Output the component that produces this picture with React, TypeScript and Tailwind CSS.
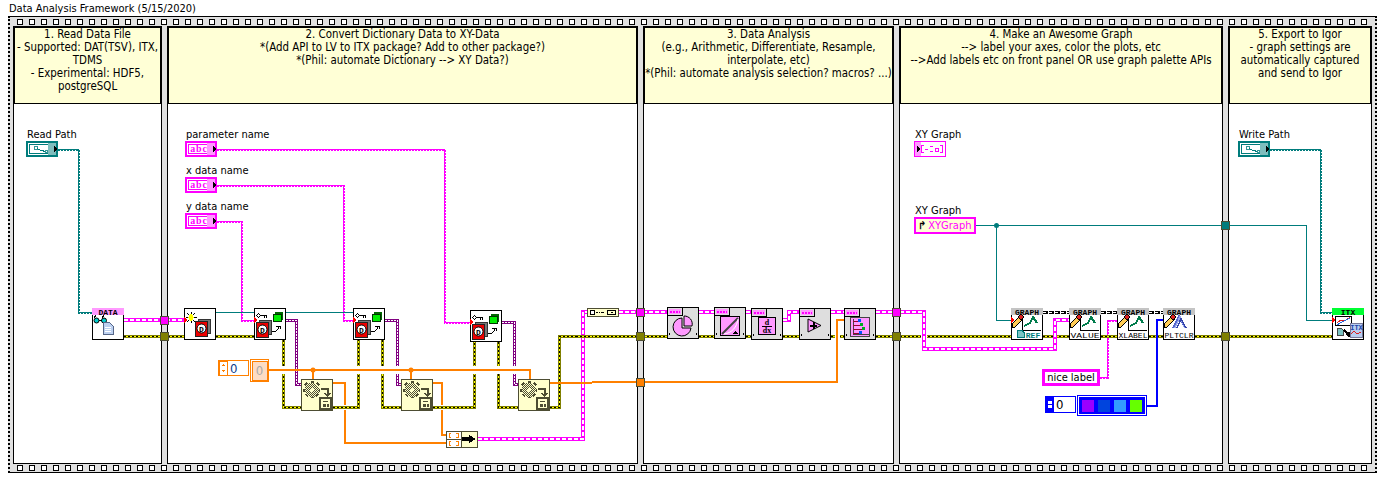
import React from 'react';

const holes = Array.from({ length: 113 }, (_, i) => i);

const panels = [
  {
    width: 'w-[149px]',
    note: ['1. Read Data File', '- Supported: DAT(TSV), ITX,', 'TDMS', '- Experimental: HDF5,', 'postgreSQL'],
  },
  {
    width: 'w-[471px]',
    note: [
      '2. Convert Dictionary Data to XY-Data',
      '*(Add API to LV to ITX package? Add to other package?)',
      '*(Phil: automate Dictionary --> XY Data?)',
    ],
  },
  {
    width: 'w-[251px]',
    note: [
      '3. Data Analysis',
      '(e.g., Arithmetic, Differentiate, Resample,',
      'interpolate, etc)',
      '*(Phil: automate analysis selection? macros? ...)',
    ],
  },
  {
    width: 'w-[324px]',
    note: [
      '4. Make an Awesome Graph',
      '-->  label your axes, color the plots, etc',
      '-->Add labels etc on front panel OR use graph palette APIs',
    ],
  },
  {
    width: 'w-[144px]',
    note: ['5. Export to Igor', '- graph settings are', 'automatically captured', 'and send to Igor'],
  },
];

const Strip = ({ top }: { top: boolean }) => (
  <div className={top ? 'flex h-[9px] gap-[6px] pl-[7px] pt-[2px]' : 'flex h-[8px] gap-[6px] pl-[7px] pt-[1px]'}>
    {holes.map((i) => (
      <div key={i} className="h-[6px] w-[6px] shrink-0 border border-black bg-white" />
    ))}
  </div>
);

// wire styles, one per LabVIEW data type
const Cluster = ({ d }: { d: string }) => (
  <g fill="none">
    <path d={d} stroke="#ff00ff" strokeWidth="4" />
    <path d={d} stroke="#ffffff" strokeWidth="2" strokeDasharray="4 2" />
  </g>
);

const ErrorWire = ({ d }: { d: string }) => (
  <g fill="none">
    <path d={d} stroke="#808000" strokeWidth="3" />
    <path d={d} stroke="#ffff00" strokeWidth="1" />
    <path d={d} stroke="#000000" strokeWidth="1" strokeDasharray="2 2" />
  </g>
);

const Purple = ({ d }: { d: string }) => (
  <g fill="none">
    <path d={d} stroke="#800080" strokeWidth="3" />
    <path d={d} stroke="#ffffff" strokeWidth="1" strokeDasharray="2 1" />
  </g>
);

const Dotted = ({ d, color }: { d: string; color: string }) => (
  <g fill="none">
    <path d={d} stroke={color} strokeWidth="1" />
    <path d={d} stroke={color} strokeWidth="2" strokeDasharray="2 1" />
  </g>
);

const Solid = ({ d, color, w = 1 }: { d: string; color: string; w?: number }) => (
  <path d={d} fill="none" stroke={color} strokeWidth={w} />
);

const Gap = ({ x, y, w, h }: { x: number; y: number; w: number; h: number }) => (
  <rect x={x} y={y} width={w} height={h} fill="#ffffff" />
);

const Tunnel = ({ x, y, color }: { x: number; y: number; color: string }) => (
  <rect x={x + 0.5} y={y + 0.5} width="8" height="8" fill={color} stroke="#4d4d33" />
);

const Book = ({ x, y }: { x: number; y: number }) => (
  <g transform={`translate(${x} ${y})`}>
    <rect x="3.5" y="0.5" width="12" height="14" fill="#777777" stroke="#333333" />
    <rect x="0.5" y="2.5" width="12" height="15" fill="#ee0000" stroke="#222222" />
    <circle cx="6.5" cy="9.5" r="4.5" fill="#ffffff" stroke="#000000" shapeRendering="auto" />
    <text x="6.5" y="12.5" textAnchor="middle" fontSize="8" fontWeight="700" fontFamily="Liberation Mono, monospace" fill="#000000">
      D
    </text>
  </g>
);

const RedPin = ({ x, y }: { x: number; y: number }) => <path d={`M${x} ${y - 3}l4 3l-4 3z`} fill="#ff0000" />;

const NewDict = ({ x, y }: { x: number; y: number }) => (
  <g transform={`translate(${x} ${y})`}>
    <rect x="0.5" y="0.5" width="31" height="31" fill="#ffffff" stroke="#000000" />
    <path d="M7 4v11M2 9.5h11M3 5l8 9M11 5l-8 9" stroke="#000000" strokeWidth="1" />
    <path d="M7 6v7M4 9.5h6M5 7l4 5M9 7l-4 5" stroke="#ffff00" strokeWidth="1.4" />
    <Book x={11} y={11} />
    <RedPin x={0} y={12} />
  </g>
);

const GetDict = ({ x, y }: { x: number; y: number }) => (
  <g transform={`translate(${x} ${y})`}>
    <rect x="0.5" y="0.5" width="31" height="31" fill="#ffffff" stroke="#000000" />
    <circle cx="4.5" cy="7.5" r="1.8" fill="#ffffff" stroke="#000000" />
    <path d="M6 7.500h7M10.500 7.500v2M12.500 7.500v2" stroke="#000000" />
    <rect x="21" y="4" width="8" height="8" fill="#006600" />
    <rect x="19.500" y="6.500" width="8" height="7" fill="#00ee00" stroke="#003300" />
    <path d="M18 24c4 0 5-1 7-5M22 18h4v3" fill="none" stroke="#000000" />
    <Book x={2} y={12} />
    <RedPin x={0} y={12} />
  </g>
);

const Config = ({ x, y }: { x: number; y: number }) => (
  <g transform={`translate(${x} ${y})`}>
    <rect x="0.500" y="0.500" width="31" height="31" fill="#ffffcc" stroke="#4d4d33" />
    <path d="M11 2v18M2 11h18M4.500 4.500l13 13M17.500 4.500l-13 13" stroke="#4d4d33" strokeWidth="3" strokeDasharray="2 1" />
    <circle cx="11" cy="11" r="7" fill="url(#checker)" />
    <circle cx="11" cy="11" r="2" fill="#ffffcc" />
    <path d="M20 9.500h6.500v6M23.500 14l3 3l3-3" fill="none" stroke="#4d4d33" strokeWidth="2" />
    <rect x="19" y="19" width="11" height="11" fill="#ffffcc" stroke="#4d4d33" strokeWidth="2" />
    <path d="M22 22.500h5M22 25h2v2h-2zM26 25h1v2h-1z" fill="#4d4d33" stroke="#4d4d33" />
  </g>
);

const GrayNode = ({ x, y, icon }: { x: number; y: number; icon: React.ReactNode }) => (
  <g transform={`translate(${x} ${y})`}>
    <rect x="0.5" y="0.5" width="31" height="31" fill="#dedede" stroke="#000000" />
    <rect x="0.5" y="0.5" width="15" height="8" fill="#dedede" stroke="#000000" />
    <rect x="2" y="2" width="12" height="5" fill="#ff99ff" />
    <path d="M3 4.5h10" stroke="#ff00ff" strokeWidth="2" strokeDasharray="2 1" />
    <path d="M2.5 26v3M29.5 26v3" stroke="#000000" strokeDasharray="2 1" />
    {icon}
  </g>
);

const GraphNode = ({ x, y, label, pltclr, refNode }: { x: number; y: number; label: string; pltclr?: boolean; refNode?: boolean }) => (
  <g transform={`translate(${x} ${y})`}>
    <rect x="0.5" y="0.5" width="31" height="31" fill="#ffffff" stroke="#000000" />
    <rect x="0" y="0" width="32" height="7" fill="#c4c4c4" />
    <text x="16" y="6.5" textAnchor="middle" fontSize="8" fontWeight="700" fontFamily="Liberation Mono, monospace" fill="#000000">
      GRAPH
    </text>
    {pltclr ? (
      <g fill="none" strokeWidth="1.5">
        <path d="M10 20l6-12l6 12" stroke="#5566cc" />
        <path d="M12 20l5-11l5 11" stroke="#99aaee" />
        <path d="M14 20l4-9l5 9" stroke="#3344aa" />
      </g>
    ) : (
      <g fill="none">
        <path d="M11 8v14h19" stroke="#000000" />
        <path d="M13 18l6-3l3-6l4 6" stroke="#007c4c" strokeWidth="2" />
      </g>
    )}
    <path d="M1 16l8-8l3 3l-8 8l-3 1z" fill="#ffcc55" stroke="#000000" />
    <path d="M7 9l3-3l3 3l-3 3z" fill="#dd2222" stroke="#000000" />
    {refNode ? (
      <g>
        <path d="M6 22.500h5l2 2v5H6z" fill="#7ac4c4" stroke="#007c7c" />
        <text x="22" y="30" textAnchor="middle" fontSize="8" fontFamily="Liberation Mono, monospace" fill="#007c7c" fontWeight="700">
          REF
        </text>
      </g>
    ) : (
      <text x="16" y="30" textAnchor="middle" fontSize="8" textLength="29" lengthAdjust="spacingAndGlyphs" fontFamily="Liberation Mono, monospace" fill="#000000">
        {label}
      </text>
    )}
  </g>
);

const StringControl = ({ x, y }: { x: number; y: number }) => (
  <g transform={`translate(${x} ${y})`}>
    <rect x="1" y="1" width="30" height="14" fill="#ffffff" stroke="#ff00ff" strokeWidth="2" />
    <rect x="3.500" y="3.500" width="20" height="9" fill="none" stroke="#ff00ff" />
    <rect x="22" y="2" width="8" height="12" fill="#ff99ff" />
    <text x="14" y="11" textAnchor="middle" fontSize="10" fontWeight="700" fontFamily="Liberation Serif, serif" fill="#ff00ff" letterSpacing="0.8">
      abc
    </text>
    <path d="M28 4.5l3 3.5l-3 3.5z" fill="#000000" />
  </g>
);

const PathControl = ({ x, y }: { x: number; y: number }) => (
  <g transform={`translate(${x} ${y})`}>
    <rect x="1" y="1" width="30" height="14" fill="#ffffff" stroke="#007c7c" strokeWidth="2" />
    <rect x="3.5" y="3.5" width="20" height="9" fill="none" stroke="#007c7c" />
    <rect x="22" y="2" width="8" height="12" fill="#7fbdbd" />
    <path d="M10 7l5 2.5l5 1" stroke="#007c7c" fill="none" />
    <rect x="8" y="5" width="3" height="3" fill="#ffffff" stroke="#007c7c" strokeWidth="0.8" />
    <rect x="19" y="9" width="2" height="2" fill="#ffffff" stroke="#007c7c" strokeWidth="0.8" />
    <path d="M28 4.5l3 3.5l-3 3.5z" fill="#000000" />
  </g>
);

const labels = [
  { text: 'Read Path', cls: 'left-[27px] top-[128px]' },
  { text: 'parameter name', cls: 'left-[186px] top-[128px]' },
  { text: 'x data name', cls: 'left-[186px] top-[164px]' },
  { text: 'y data name', cls: 'left-[186px] top-[200px]' },
  { text: 'XY Graph', cls: 'left-[915px] top-[128px]' },
  { text: 'XY Graph', cls: 'left-[915px] top-[204px]' },
  { text: 'Write Path', cls: 'left-[1239px] top-[128px]' },
];

const chain = 'M1043 312.500H1069M1101 312.500H1117M1149 312.500H1163';

const Wires = () => (
  <svg className="absolute left-0 top-0" width="1383" height="482" shapeRendering="crispEdges">
    <defs>
      <pattern id="checker" width="2" height="2" patternUnits="userSpaceOnUse">
        <rect width="2" height="2" fill="#ffffcc" />
        <rect width="1" height="1" fill="#4d4d33" />
        <rect x="1" y="1" width="1" height="1" fill="#4d4d33" />
      </pattern>
    </defs>

    {/* dotted wires from the controls */}
    <Dotted d="M58 149.500H78.500V312.500H92" color="#007c7c" />
    <Dotted d="M1270 149.500H1320.500V312.500H1332" color="#007c7c" />
    <Dotted d="M217 149.500H444.500V322.500H470" color="#ff00ff" />
    <Dotted d="M217 185.500H343.500V320.500H353" color="#ff00ff" />
    <Dotted d="M217 221.500H241.500V320.500H254" color="#ff00ff" />
    <Dotted d="M1100 377.500H1107.500V320.500H1117" color="#ff00ff" />

    {/* dictionary refnum */}
    <Solid d="M216 312.5H254M286 312.5H353" color="#007c7c" />
    <Solid d="M976 225.5H1306.5V320.5H1332" color="#007c7c" />
    <Solid d="M996.5 225V320.5H1011" color="#007c7c" />
    <circle cx="996.5" cy="225.5" r="2.5" fill="#007c7c" shapeRendering="auto" />

    {/* class wires */}
    <Purple d="M286 320.500H296.500V384.500H301" />
    <Purple d="M385 320.500H397.500V384.500H401" />
    <Purple d="M502 322.500H514.500V384.500H518" />

    {/* error wire */}
    <ErrorWire d="M124 336.500H184M216 336.500H254" />
    <ErrorWire d="M283.500 340V407.500H301M333 407.500H358.500V340" />
    <ErrorWire d="M382.500 340V407.500H401M433 407.500H474.500V342" />
    <ErrorWire d="M498.500 342V407.500H518M550 407.500H559.500V336.500H667" />
    <ErrorWire d="M699 336.500H714M746 336.500H751M783 336.500H799M831 336.500H844M876 336.500H1011" />
    <ErrorWire d="M1043 336.500H1069M1101 336.500H1117M1149 336.500H1163M1195 336.500H1332" />

    {/* cluster wires */}
    <Cluster d="M124 320H184" />
    <Gap x={580} y={334} w={7} h={5} />
    <Cluster d="M478 439H583V312H587" />
    <ErrorWire d="M576 336.500H592" />
    <Cluster d="M619 312H667M699 312H714M746 312H751M783 320H789V312H799M831 312H844" />
    <Gap x={921} y={334} w={6} h={5} />
    <Cluster d="M876 312H924V349H1055V320H1069" />
    <Gap x={835} y={334} w={5} h={5} />

    {/* numeric wires */}
    <Gap x={281} y={366} w={5} h={8} />
    <Gap x={356} y={366} w={5} h={8} />
    <Gap x={380} y={366} w={5} h={8} />
    <Gap x={395} y={366} w={5} h={8} />
    <Gap x={472} y={366} w={5} h={8} />
    <Gap x={496} y={366} w={5} h={8} />
    <Gap x={512} y={366} w={5} h={8} />
    <Solid d="M268 370H530V379" color="#ff8000" w={2} />
    <Solid d="M313 370V379M411 370V379" color="#ff8000" w={2} />
    <circle cx="313" cy="370" r="2.5" fill="#ff8000" shapeRendering="auto" />
    <circle cx="411" cy="370" r="2.5" fill="#ff8000" shapeRendering="auto" />
    <Solid d="M333 383H345V405M345 410V443H446" color="#ff8000" w={2} />
    <Solid d="M433 383H442V405M442 410V435H446" color="#ff8000" w={2} />
    <Solid d="M550 383H592M592 382H837V320H844" color="#ff8000" w={2} />

    <Solid d="M1147 405.500H1156.500V320H1163" color="#0000ff" w={2} />

    {/* graph reference chain */}
    <g fill="none">
      <path d={chain} stroke="#000000" strokeWidth="3" strokeDasharray="5 1" />
      <path d={chain} stroke="#ffffff" strokeWidth="1" strokeDasharray="3 3" />
    </g>

    {/* sequence tunnels */}
    <Tunnel x={160} y={316} color="#ff00ff" />
    <Tunnel x={160} y={332} color="#808000" />
    <Tunnel x={636} y={308} color="#ff00ff" />
    <Tunnel x={636} y={332} color="#808000" />
    <Tunnel x={636} y={378} color="#ff8000" />
    <Tunnel x={892} y={308} color="#ff00ff" />
    <Tunnel x={892} y={332} color="#808000" />
    <Tunnel x={1221} y={332} color="#808000" />
    <Tunnel x={1221} y={221} color="#007c7c" />

    {/* controls */}
    <PathControl x={26} y={141} />
    <PathControl x={1238} y={141} />
    <StringControl x={185} y={141} />
    <StringControl x={185} y={177} />
    <StringControl x={185} y={213} />

    <g>
      <rect x="914.5" y="141.5" width="31" height="15" fill="#ffffff" stroke="#ff00ff" />
      <rect x="915" y="142" width="6" height="14" fill="#ff99ff" />
      <path d="M917 146l3 3l-3 3z" fill="#000000" />
      <path d="M923.500 145.500h-2v7h2M925 149h3M930 146.500h3M930 151.500h3M940 145.500h2v7h-2" fill="none" stroke="#ff00ff" />
      <rect x="935.500" y="148.500" width="3" height="3" fill="#ffffff" stroke="#ff00ff" />
    </g>

    {/* read node */}
    <g transform="translate(92 308)">
      <rect x="0.5" y="0.5" width="31" height="31" fill="#ffffff" stroke="#000000" />
      <rect x="0" y="0" width="32" height="7" fill="#ff99ff" />
      <text x="16" y="6.5" textAnchor="middle" fontSize="8" fontWeight="700" fontFamily="Liberation Mono, monospace" fill="#000000">
        DATA
      </text>
      <circle cx="4.5" cy="12.5" r="2.5" fill="#00cccc" stroke="#000000" shapeRendering="auto" />
      <circle cx="12" cy="12.5" r="2.5" fill="#00cccc" stroke="#000000" shapeRendering="auto" />
      <path d="M7 12.5h2.5M2 10l2-3M10 10l2-3" stroke="#000000" fill="none" />
      <path d="M11.500 14.500h6l4 4v8h-10z" fill="#bcd0f0" stroke="#556688" />
      <path d="M13 19h6M13 21h6M13 23h6" stroke="#ffffff" />
    </g>

    <NewDict x={184} y={308} />
    <GetDict x={254} y={308} />
    <GetDict x={353} y={308} />
    <GetDict x={470} y={310} />

    <Config x={301} y={379} />
    <Config x={401} y={379} />
    <Config x={518} y={379} />

    {/* numeric control and constant */}
    <g>
      <rect x="218.500" y="360.500" width="30" height="15" fill="#ffffff" stroke="#ff8000" />
      <rect x="219" y="361" width="8" height="14" fill="#ffffff" stroke="#ff8000" />
      <path d="M221 366l2-2l2 2zM221 370l2 2l2-2z" fill="#ff8000" />
      <rect x="250.500" y="359.500" width="18" height="22" fill="#ffffff" stroke="#ff8000" />
      <rect x="252" y="361" width="15" height="19" fill="#fcdcc4" stroke="#ff8000" />
    </g>

    {/* build array */}
    <g>
      <rect x="446.500" y="431.500" width="31" height="16" fill="#ffffcc" stroke="#4d4d33" />
      <rect x="446.500" y="431.500" width="15" height="8" fill="#ffffff" stroke="#4d4d33" />
      <rect x="446.500" y="439.500" width="15" height="8" fill="#ffffff" stroke="#4d4d33" />
      <path d="M451 433.500h-2v4h2M456 433.500h2v4h-2M451 441.500h-2v4h2M456 441.500h2v4h-2" fill="none" stroke="#ff8000" />
      <path d="M462 437h7v-2l7 4l-7 4v-2h-7z" fill="#000000" />
    </g>

    {/* unbundle */}
    <g>
      <rect x="587.500" y="308.500" width="31" height="8" fill="#ffffcc" stroke="#4d4d33" />
      <rect x="590.500" y="310.500" width="4" height="4" fill="#ffffff" stroke="#000000" />
      <path d="M596 312.500h2M599 312.500h1M601 312.500h3" stroke="#000000" />
      <rect x="607.500" y="310.500" width="8" height="4" fill="#ffffcc" stroke="#000000" />
      <rect x="611" y="312" width="2" height="1" fill="#000000" />
    </g>

    {/* analysis nodes */}
    <GrayNode
      x={667}
      y={307}
      icon={
        <g shapeRendering="auto">
          <path d="M15 11a9 9 0 1 0 9 10h-9z" fill="#ff99ff" stroke="#000000" />
          <path d="M17 9a8 8 0 0 1 8 10h-8z" fill="#ff99ff" stroke="#000000" />
        </g>
      }
    />
    <GrayNode
      x={714}
      y={307}
      icon={
        <g>
          <rect x="6.500" y="9.500" width="19" height="19" fill="#ff99ff" stroke="#000000" />
          <path d="M8 27L24 11" stroke="#444444" strokeWidth="2" shapeRendering="auto" />
          <path d="M10 27c8-1 13-7 14-15" stroke="#ffffff" fill="none" shapeRendering="auto" />
          <path d="M18 27h6l-3-3z" fill="#000000" />
        </g>
      }
    />
    <GrayNode
      x={751}
      y={308}
      icon={
        <g>
          <rect x="7.500" y="9.500" width="17" height="17" fill="#ff99ff" stroke="#000000" />
          <path d="M11 18h10" stroke="#000000" />
          <text x="16" y="16.500" textAnchor="middle" fontSize="8" fontFamily="Liberation Serif, serif" fontWeight="700" fill="#000000">
            d
          </text>
          <text x="16" y="25" textAnchor="middle" fontSize="8" fontFamily="Liberation Serif, serif" fontWeight="700" fill="#000000">
            dx
          </text>
        </g>
      }
    />
    <GrayNode
      x={799}
      y={308}
      icon={
        <g>
          <path d="M9 11v13l13-6.500z" fill="#ff99ff" stroke="#000000" shapeRendering="auto" />
          <path d="M11 17.500h7M14.500 14v7" stroke="#000000" strokeWidth="2" />
        </g>
      }
    />
    <GrayNode
      x={844}
      y={308}
      icon={
        <g>
          <rect x="6.500" y="9.500" width="19" height="19" fill="#ff99ff" stroke="#444444" />
          <path d="M9 11v15h16" fill="none" stroke="#444444" />
          <path d="M9 13h5M9 17h7M9 21h9M9 25h6" stroke="#990033" />
          <rect x="14" y="11" width="3" height="3" fill="#0055ff" />
          <rect x="16" y="15" width="3" height="3" fill="#00aa22" />
          <rect x="18" y="19" width="3" height="3" fill="#00aa22" />
          <rect x="15" y="23" width="3" height="3" fill="#0055ff" />
        </g>
      }
    />

    {/* graph nodes */}
    <GraphNode x={1011} y={308} label="REF" refNode />
    <GraphNode x={1069} y={308} label="VALUE" />
    <GraphNode x={1117} y={308} label="XLABEL" />
    <GraphNode x={1163} y={308} label="PLTCLR" pltclr />
    <RedPin x={1011} y={320} />

    {/* export node */}
    <g transform="translate(1332 308)">
      <rect x="0.5" y="0.5" width="31" height="31" fill="#ffffff" stroke="#000000" />
      <rect x="0" y="0" width="32" height="7" fill="#00ff33" />
      <text x="16" y="6.5" textAnchor="middle" fontSize="8" fontWeight="700" fontFamily="Liberation Mono, monospace" fill="#000000">
        ITX
      </text>
      <rect x="3.500" y="8.500" width="16" height="9" fill="#ffffff" stroke="#000000" />
      <path d="M5 15l4-3l4 1l5-4" stroke="#dd2222" fill="none" />
      <path d="M5 17l5-3l8-4" stroke="#2266dd" fill="none" />
      <path d="M5.500 20.500h4l2 2v5h-6z" fill="#7ac4c4" stroke="#444444" />
      <path d="M12 22l3 3h2v3M15 26l2 2l2-2" fill="none" stroke="#000000" strokeWidth="1.500" />
      <rect x="18.500" y="15.500" width="12" height="14" fill="#b8cdf0" stroke="#777799" />
      <text x="24.500" y="21.500" textAnchor="middle" fontSize="7" fontFamily="Liberation Mono, monospace" fontWeight="700" fill="#2244aa">
        ITX
      </text>
      <path d="M19 26l3-3l3 3l4-2" stroke="#dd2222" fill="none" />
    </g>
    <RedPin x={1332} y={320} />
  </svg>
);

export default function App() {
  return (
    <div className="relative h-[482px] w-[1383px] overflow-hidden bg-white font-['DejaVu_Sans_Condensed','DejaVu_Sans',sans-serif] text-[11px] leading-[13px] text-black">
      <div className="h-[16px] pl-[9px] pt-[2px]">Data Analysis Framework (5/15/2020)</div>
      <div className="ml-[8px] h-[457px] w-[1369px] border-x-2 border-y border-x-black border-y-black border-dotted bg-[#e0e0e0] [border-top-style:solid] [border-bottom-style:solid]">
        <Strip top />
        <div className="flex h-[438px] gap-[5px] pl-[3px]">
          {panels.map((panel, i) => (
            <div key={i} className={`${panel.width} flex flex-col border-x border-b border-black bg-white`}>
              <div className="h-[78px] border-t-2 border-b border-x border-black bg-[#ffffd6] text-center text-[11.4px]">
                {panel.note.map((line, j) => (
                  <div key={j} className="whitespace-nowrap">
                    {line}
                  </div>
                ))}
              </div>
            </div>
          ))}
        </div>
        <Strip top={false} />
      </div>

      <Wires />

      {labels.map((label, i) => (
        <div key={i} className={`absolute whitespace-nowrap ${label.cls}`}>
          {label.text}
        </div>
      ))}

      {/* text inside the front panel terminals */}
      <div className="absolute left-[914px] top-[217px] flex h-[17px] w-[62px] items-center gap-[2px] whitespace-nowrap border-2 border-[#ff00ff] bg-[#ffffd6] pl-[2px] text-[#ff00ff]">
        <span className="text-[11px] font-bold text-black">↱</span>
        <span>XYGraph</span>
      </div>
      <div className="absolute left-[228px] top-[361px] flex h-[14px] w-[20px] items-center pl-[2px] text-[13px] text-[#0a3c8c]">0</div>
      <div className="absolute left-[252px] top-[361px] flex h-[19px] w-[15px] items-center justify-center text-[13px] text-[#aaaaaa]">0</div>
      <div className="absolute left-[1042px] top-[369px] flex h-[17px] w-[58px] items-center justify-center whitespace-nowrap border-[3px] border-[#ff00ff] bg-white">
        nice label
      </div>
      <div className="absolute left-[1045px] top-[396px] flex h-[17px] w-[31px] items-center border border-[#0000ff] bg-white">
        <div className="flex h-full w-[8px] flex-col items-center justify-center gap-[1px] bg-[#0000ff]">
          <div className="h-[3px] w-[4px] bg-white" />
          <div className="h-[3px] w-[4px] bg-white" />
        </div>
        <span className="pl-[2px] text-[13px]">0</span>
      </div>
      <div className="absolute left-[1077px] top-[395px] flex h-[21px] w-[70px] items-center gap-[4px] border-[2px] border-[#0000ff] bg-[#0000ff] pl-[3px] outline outline-1 -outline-offset-[2px] outline-white">
        <div className="h-[12px] w-[12px] bg-[#9900ff]" />
        <div className="h-[12px] w-[12px] bg-[#0044dd]" />
        <div className="h-[12px] w-[12px] bg-[#3399ff]" />
        <div className="h-[12px] w-[12px] bg-[#66ff00]" />
      </div>
    </div>
  );
}
